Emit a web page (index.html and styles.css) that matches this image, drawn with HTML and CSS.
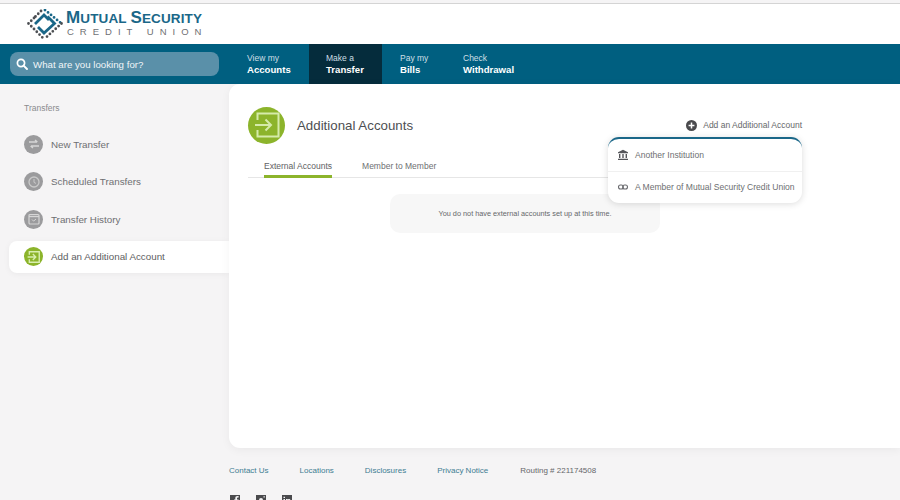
FILE: index.html
```html
<!DOCTYPE html>
<html lang="en">
<head>
<meta charset="utf-8">
<title>Additional Accounts</title>
<link rel="stylesheet" href="styles.css">
</head>
<body>
<div class="page">
  <header class="brand">
    <svg class="logo-mark" width="36" height="30" viewBox="0 0 36 30" aria-hidden="true">
      <g fill="none" stroke-linecap="round">
        <path d="M1.500 14.500 L8 8 M1.500 14.500 L15.500 28.500 M8.500 7.500 L15 1" stroke="#4c4f53" stroke-width="2.800" stroke-dasharray="0 3.900"/>
        <path d="M18 1 L34.500 14.500" stroke="#1a6788" stroke-width="2.800" stroke-dasharray="0 3.900"/>
        <path d="M34.500 14.500 L19 28.500" stroke="#4c4f53" stroke-width="2.800" stroke-dasharray="0 3.900"/>
        <path d="M8 15 L17 6 L22 11" stroke="#1a6788" stroke-width="2.800" stroke-linecap="butt"/>
        <path d="M20.500 7.500 L27.500 14.500 L17 24 L11 18" stroke="#1a6788" stroke-width="2.800" stroke-linecap="butt"/>
      </g>
    </svg>
    <div class="logo-text">
      <div class="logo-name"><span class="cap">M</span>UTUAL <span class="cap">S</span>ECURITY</div>
      <div class="logo-sub">CREDIT UNION</div>
    </div>
  </header>
  <nav class="topnav">
    <div class="search">
      <svg width="12" height="12" viewBox="0 0 12 12" aria-hidden="true"><circle cx="5" cy="5" r="3.600" fill="none" stroke="#fff" stroke-width="1.700"/><path d="M7.600 7.600 L11 11" stroke="#fff" stroke-width="1.900" stroke-linecap="round"/></svg>
      <span>What are you looking for?</span>
    </div>
    <a class="navitem first"><span>View my</span><b>Accounts</b></a>
    <a class="navitem active"><span>Make a</span><b>Transfer</b></a>
    <a class="navitem third"><span>Pay my</span><b>Bills</b></a>
    <a class="navitem"><span>Check</span><b>Withdrawal</b></a>
  </nav>
  <div class="body">
    <aside class="side">
      <div class="side-title">Transfers</div>
      <a class="side-item">
        <span class="dot"><svg width="14" height="14" viewBox="0 0 14 14" aria-hidden="true"><path d="M2 5h8M8 3l2.400 2M12 9H4M6 11 3.600 9" fill="none" stroke="#d6d6d6" stroke-width="1.400"/></svg></span>New Transfer
      </a>
      <a class="side-item">
        <span class="dot"><svg width="14" height="14" viewBox="0 0 14 14" aria-hidden="true"><circle cx="7" cy="7" r="5" fill="none" stroke="#c9c9c9" stroke-width="1.300"/><path d="M7 4v3.400l2 1" fill="none" stroke="#c9c9c9" stroke-width="1"/></svg></span>Scheduled Transfers
      </a>
      <a class="side-item">
        <span class="dot"><svg width="14" height="14" viewBox="0 0 14 14" aria-hidden="true"><rect x="2" y="2.500" width="10" height="9.500" rx="1" fill="none" stroke="#d6d6d6" stroke-width="1.200"/><path d="M2 4.500h10" stroke="#d6d6d6" stroke-width="1.400"/><path d="M5 7.500l1.600 1.600L9 7" fill="none" stroke="#d6d6d6"/></svg></span>Transfer History
      </a>
      <a class="side-item current">
        <span class="dot green"><svg width="14" height="14" viewBox="0 0 24 24" aria-hidden="true"><path d="M4 8V3h17v18H4v-5M1 12h13M10 7l5 5-5 5" fill="none" stroke="#d9eeb0" stroke-width="2.400"/></svg></span>Add an Additional Account
      </a>
    </aside>
    <div class="content">
      <main class="card">
        <div class="head">
          <div class="title-wrap">
            <span class="big-dot"><svg width="26" height="26" viewBox="0 0 26 26" aria-hidden="true"><path d="M3.500 8V1.500h21v23h-21V18M1 13h15M11.500 7.500 17 13l-5.500 5.500" fill="none" stroke="#d5ebaa" stroke-width="2"/></svg></span>
            <h1>Additional Accounts</h1>
          </div>
          <div class="add-wrap">
            <a class="add"><svg width="11" height="11" viewBox="0 0 11 11" aria-hidden="true"><circle cx="5.500" cy="5.500" r="5.500" fill="#4a4a4d"/><path d="M5.500 2.600v5.800M2.600 5.500h5.800" stroke="#fff" stroke-width="1.500"/></svg>Add an Additional Account</a>
            <div class="menu">
              <a class="menu-item"><svg width="12" height="12" viewBox="0 0 12 12" aria-hidden="true"><path d="M6 .8 11 3.200v1H1v-1zM2 5h1.400v4H2zM5.300 5h1.400v4H5.300zM8.600 5H10v4H8.600zM1 9.700h10V11H1z" fill="#55565a"/></svg>Another Institution</a>
              <a class="menu-item"><svg width="12" height="12" viewBox="0 0 12 12" aria-hidden="true"><rect x="1.500" y="4" width="4.800" height="4" rx="2" fill="none" stroke="#6a6b6f" stroke-width="1.100"/><rect x="5.700" y="4" width="4.800" height="4" rx="2" fill="none" stroke="#6a6b6f" stroke-width="1.100"/></svg>A Member of Mutual Security Credit Union</a>
            </div>
          </div>
        </div>
        <div class="tabs">
          <a class="tab selected">External Accounts</a>
          <a class="tab">Member to Member</a>
        </div>
        <div class="notice">You do not have external accounts set up at this time.</div>
      </main>
      <footer class="foot">
        <div class="links">
          <a>Contact Us</a><a>Locations</a><a>Disclosures</a><a>Privacy Notice</a><span>Routing # 221174508</span>
        </div>
        <div class="social">
          <svg width="10" height="10" viewBox="0 0 10 10" aria-hidden="true"><path d="M0 0h10v10H7V6h1.400l.2-1.600H7V3.300c0-.5.2-.8.8-.8h.8V1.100H7.500C6 1.100 5.300 2 5.300 3.200v1.200H4V6h1.300v4H0z" fill="#4a4a4d"/></svg>
          <svg width="10" height="10" viewBox="0 0 10 10" aria-hidden="true"><path fill-rule="evenodd" d="M0 0h10v10H0zM5 3a2 2 0 1 0 0 4 2 2 0 0 0 0-4zM7.500 1.200v1.300h1.300V1.200z" fill="#4a4a4d"/></svg>
          <svg width="10" height="10" viewBox="0 0 10 10" aria-hidden="true"><path fill-rule="evenodd" d="M0 0h10v10H0zM1.500 4v4.500H3V4zM1.500 1.700v1.400H3V1.700zM4 4v4.500h1.500V6c0-1.200 1.500-1.200 1.500 0v2.500h1.500V5.500C8.500 3.800 6.300 3.700 5.500 4.600V4z" fill="#4a4a4d"/></svg>
        </div>
      </footer>
    </div>
  </div>
</div>
</body>
</html>
```
FILE: styles.css
```css
* { box-sizing: border-box; }
html, body { margin: 0; padding: 0; height: 100%; overflow: hidden; }
body { background: #f5f4f5; font-family: "Liberation Sans", Arial, sans-serif; color: #66676a; }
a { color: inherit; text-decoration: none; }
.page { width: 900px; height: 500px; display: flex; flex-direction: column; overflow: hidden; }

.brand { flex: none; height: 41px; margin-top: 3px; background: #fff; border-top: 1px solid #d4d4d4; display: flex; align-items: center; padding-left: 27px; }
.logo-mark { flex: none; margin-right: 3px; }
.logo-text { width: 140px; }
.logo-name { font-size: 13.500px; font-weight: 700; color: #1a6788; line-height: 14px; letter-spacing: .14px; white-space: nowrap; }
.cap { font-size: 17px; }
.logo-sub { font-size: 9.500px; color: #6f7073; letter-spacing: 6px; line-height: 11px; white-space: nowrap; padding-left: 1px; }

.topnav { height: 40px; flex: none; background: #005f80; display: flex; align-items: stretch; color: #fff; }
.search { width: 209px; height: 24px; margin: 8px 28px 0 10px; border-radius: 8px; background: #5a90a9; display: flex; align-items: center; gap: 5px; padding-left: 6px; font-size: 9.700px; color: #f1f6f8; }
.navitem { display: flex; flex-direction: column; justify-content: center; font-size: 8.500px; line-height: 12px; white-space: nowrap; padding-left: 17px; width: 80px; }
.navitem span { color: #cfdfe6; }
.navitem b { font-size: 9.600px; color: #fff; }
.navitem.first { width: 62px; padding-left: 0; }
.navitem.active { background: #052c3c; width: 73px; }
.navitem.third { width: 64px; padding-left: 18px; }

.body { flex: 1; display: flex; min-height: 0; }
.side { width: 229px; flex: none; padding-top: 19px; }
.side-title { font-size: 8.500px; color: #8a8b8e; padding-left: 24px; line-height: 10px; margin-bottom: 15px; }
.side-item { display: flex; align-items: center; height: 32px; margin-left: 9px; padding-left: 15px; margin-bottom: 5.600px; font-size: 9.800px; gap: 8px; color: #6e6f72; border-radius: 8px 0 0 8px; }
.side-item.current { background: #fff; color: #5d5e61; box-shadow: 0 1px 6px rgba(0,0,0,.05); }
.dot { width: 19px; height: 19px; border-radius: 50%; background: #9b9b9d; display: flex; align-items: center; justify-content: center; flex: none; }
.dot.green { background: #8cb42b; }

.content { flex: 1; min-width: 0; }
.card { height: 364px; background: #fff; border-radius: 11px 0 0 11px; padding: 23px 0 0 19px; box-shadow: 0 2px 10px rgba(0,0,0,.05); }
.head { display: flex; justify-content: space-between; align-items: center; padding-right: 98px; height: 36px; }
.title-wrap { display: flex; align-items: center; gap: 12px; }
.big-dot { width: 37px; height: 37px; border-radius: 50%; background: #8cb42b; display: flex; align-items: center; justify-content: center; }
h1 { margin: 0; font-size: 13.300px; font-weight: 400; color: #4e4f52; }
.add-wrap { position: relative; }
.add { display: flex; align-items: center; gap: 6px; font-size: 8.500px; color: #66676a; white-space: nowrap; }
.menu { position: absolute; top: 17px; right: 0; width: 194px; background: #fff; border-top: 2px solid #1a6788; border-radius: 11px; box-shadow: 0 1px 7px rgba(0,0,0,.14); z-index: 2; }
.menu-item { display: flex; align-items: center; height: 32px; gap: 6px; padding-left: 9px; font-size: 8.550px; color: #6e6f72; white-space: nowrap; }
.menu-item + .menu-item { border-top: 1px solid #f0f0f0; }
.tabs { display: flex; gap: 30px; margin-top: 11px; height: 24px; padding-left: 16px; border-bottom: 1px solid #e6e6e6; width: 554px; }
.tab { font-size: 8.500px; color: #6e6f72; line-height: 24px; height: 24px; white-space: nowrap; }
.tab.selected { border-bottom: 3px solid #8cb42b; color: #606164; }
.notice { margin: 16px 0 0 142px; width: 270px; height: 39px; background: #f7f7f7; border-radius: 10px; font-size: 7.300px; color: #66676a; text-align: center; line-height: 39px; }

.foot { padding-top: 18px; }
.links { display: flex; font-size: 8px; color: #3e7d92; line-height: 10px; gap: 31px; }
.links span { color: #66676a; margin-left: 1px; }
.social { display: flex; gap: 16px; margin-top: 19px; margin-left: 1px; }
```
